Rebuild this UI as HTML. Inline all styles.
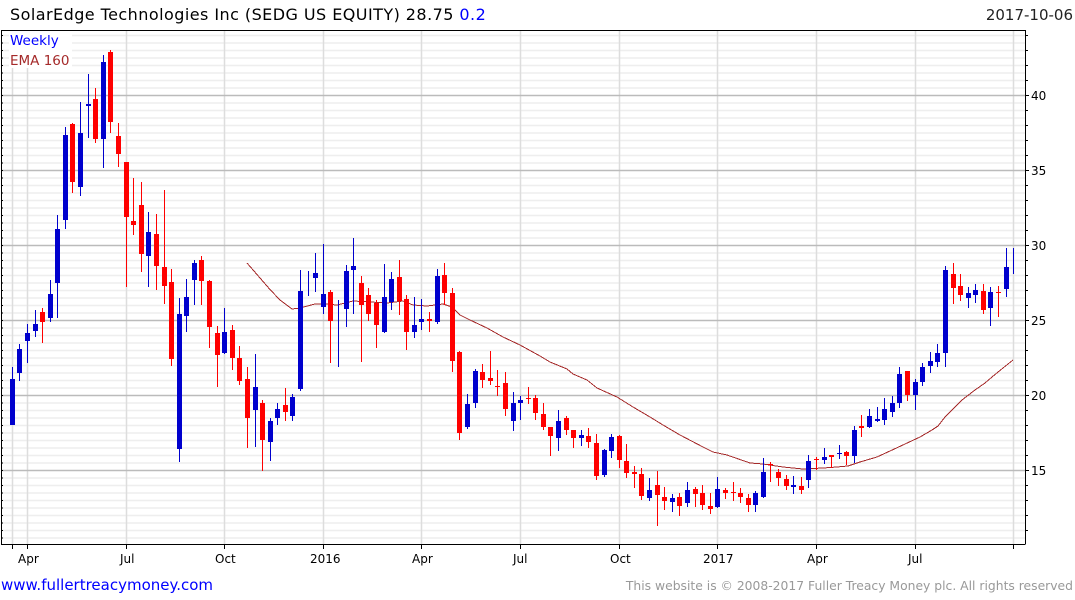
<!DOCTYPE html>
<html><head><meta charset="utf-8"><style>
html,body{margin:0;padding:0;background:#fff;width:1075px;height:600px;overflow:hidden}
svg{display:block}
text{font-family:"DejaVu Sans",sans-serif}
</style></head><body>
<svg width="1075" height="600" viewBox="0 0 1075 600" xmlns="http://www.w3.org/2000/svg">
<rect width="1075" height="600" fill="#fff"/>
<g stroke="#eee" stroke-width="1.5"><path d="M2 35.5H1025M2 43H1025M2 50.5H1025M2 58H1025M2 65.5H1025M2 73H1025M2 80.5H1025M2 88H1025M2 103H1025M2 110.5H1025M2 118H1025M2 125.5H1025M2 133H1025M2 140.5H1025M2 148H1025M2 155.5H1025M2 163H1025M2 178H1025M2 185.5H1025M2 193H1025M2 200.5H1025M2 208H1025M2 215.5H1025M2 223H1025M2 230.5H1025M2 238H1025M2 253H1025M2 260.5H1025M2 268H1025M2 275.5H1025M2 283H1025M2 290.5H1025M2 298H1025M2 305.5H1025M2 313H1025M2 328H1025M2 335.5H1025M2 343H1025M2 350.5H1025M2 358H1025M2 365.5H1025M2 373H1025M2 380.5H1025M2 388H1025M2 403H1025M2 410.5H1025M2 418H1025M2 425.5H1025M2 433H1025M2 440.5H1025M2 448H1025M2 455.5H1025M2 463H1025M2 478H1025M2 485.5H1025M2 493H1025M2 500.5H1025M2 508H1025M2 515.5H1025M2 523H1025M2 530.5H1025M2 538H1025"/></g>
<g stroke="#ddd" stroke-width="1.5"><path d="M12.5 31V544M27.5 31V544M126.5 31V544M224.5 31V544M323.5 31V544M421.5 31V544M520.5 31V544M619.5 31V544M717.5 31V544M816.5 31V544M915.5 31V544M1013.5 31V544"/></g>
<g stroke="#bbb" stroke-width="1.5"><path d="M2 95.5H1025M2 170.5H1025M2 245.5H1025M2 320.5H1025M2 395.5H1025M2 470.5H1025"/></g>
<rect x="9" y="31" width="63" height="37" fill="#fff"/>
<polyline fill="none" stroke="#a52a2a" stroke-width="1" shape-rendering="crispEdges" points="247,263 270,289.5 280,300 292,309 300,308 315,304 325,304 337,305 353,301 370,302 387,303 403,301 413,305 427,306 443,304 452,307 460,315 470,320 487,328 503,337 520,345 540,356 550,362 567,369 573,374 587,380 597,388 617,397 633,407 650,417 663,425 680,435 703,447 713,452 727,455 750,463 763,464 783,467 803,469 823,468 837,467 848,466 860,462 877,457 890,451 905,444 920,437 932,430 938,426 945,417 962,400 975,390 985,383 992,377 1003,368 1013,360"/>
<g stroke="#0000cd" stroke-width="1" shape-rendering="crispEdges"><path d="M12.5 367V425M19.5 344V381M27.5 324V363M35.5 310V337M50.5 280V322M57.5 215V318M65.5 127V229M80.5 102V196M88.5 74V138M103.5 55V168M148.5 212V287M179.5 298V462M186.5 279V332M194.5 260V305M224.5 308V354M255.5 354V447M270.5 418V461M277.5 403V425M292.5 394V421M300.5 270V391M308.5 271V296M315.5 253V292M323.5 244V314M338.5 300V367M346.5 265V327M353.5 238V314M384.5 264V333M391.5 272V310M414.5 297V338M421.5 299V330M437.5 269V324M467.5 394V429M475.5 369V408M513.5 392V431M520.5 396V420M558.5 410V451M581.5 430V446M604.5 449V477M611.5 434V458M649.5 478V501M672.5 494V512M687.5 482V507M717.5 477V508M755.5 491V512M763.5 458V498M793.5 476V494M808.5 455V488M824.5 448V464M839.5 445V459M854.5 426V463M869.5 409V428M877.5 407V422M884.5 398V425M892.5 396V417M899.5 367V408M915.5 379V410M922.5 363V386M930.5 352V373M937.5 344V367M945.5 266V367M968.5 287V308M975.5 284V303M990.5 287V326M1006.5 248V297M1013.5 248V274"/></g>
<g fill="#0000cd" shape-rendering="crispEdges"><path d="M10 379h5V425h-5zM17 349h5V373h-5zM25 333h5V341h-5zM33 324h5V331h-5zM48 294h5V318h-5zM55 229h5V283h-5zM63 135h5V220h-5zM78 133h5V187h-5zM86 104h5V106h-5zM101 62h5V139h-5zM146 232h5V256h-5zM177 314h5V449h-5zM184 297h5V316h-5zM192 263h5V280h-5zM222 332h5V353h-5zM253 387h5V410h-5zM268 421h5V442h-5zM275 409h5V418h-5zM290 397h5V416h-5zM298 291h5V389h-5zM313 273h5V278h-5zM321 294h5V307h-5zM344 271h5V309h-5zM351 266h5V270h-5zM382 297h5V332h-5zM389 279h5V302h-5zM412 325h5V332h-5zM419 319h5V322h-5zM435 276h5V322h-5zM465 404h5V427h-5zM473 371h5V403h-5zM511 403h5V421h-5zM518 400h5V403h-5zM556 421h5V438h-5zM579 435h5V438h-5zM602 450h5V475h-5zM609 437h5V451h-5zM647 490h5V498h-5zM670 498h5V502h-5zM685 490h5V503h-5zM715 489h5V507h-5zM753 493h5V505h-5zM761 472h5V497h-5zM791 485h5V487h-5zM806 461h5V480h-5zM822 457h5V460h-5zM837 453h5V454h-5zM852 430h5V456h-5zM867 416h5V427h-5zM875 419h5V421h-5zM882 409h5V420h-5zM890 403h5V412h-5zM897 374h5V403h-5zM913 382h5V395h-5zM920 367h5V382h-5zM928 361h5V366h-5zM935 353h5V362h-5zM943 270h5V353h-5zM966 293h5V298h-5zM973 290h5V295h-5zM988 292h5V308h-5zM1004 267h5V289h-5z"/></g>
<g stroke="#f00" stroke-width="1" shape-rendering="crispEdges"><path d="M42.5 308V343M72.5 123V193M95.5 88V143M110.5 50V133M118.5 123V167M126.5 162V287M133.5 178V235M141.5 182V272M156.5 214V290M164.5 190V304M171.5 269V366M201.5 256V305M209.5 280V348M217.5 326V387M232.5 325V370M239.5 346V385M247.5 367V448M262.5 400V471M285.5 388V421M330.5 290V363M361.5 276V362M368.5 288V321M376.5 300V348M399.5 260V315M406.5 295V350M429.5 312V332M444.5 263V305M452.5 288V372M459.5 351V440M482.5 364V388M490.5 351V385M497.5 370V396M505.5 372V416M528.5 387V404M535.5 395V420M543.5 403V430M550.5 427V456M566.5 416V435M573.5 430V448M588.5 428V448M596.5 434V480M619.5 435V468M626.5 444V478M634.5 466V488M641.5 468V500M657.5 471V526M664.5 487V510M679.5 493V516M695.5 487V507M702.5 485V510M710.5 493V514M725.5 488V499M733.5 482V501M740.5 488V503M748.5 494V512M770.5 462V482M778.5 469V486M786.5 475V490M801.5 477V494M816.5 457V470M831.5 455V468M846.5 451V465M861.5 415V437M907.5 371V401M953.5 263V304M960.5 274V301M983.5 284V314M998.5 286V317"/></g>
<g fill="#f00" shape-rendering="crispEdges"><path d="M40 312h5V322h-5zM70 124h5V182h-5zM93 99h5V139h-5zM108 52h5V122h-5zM116 136h5V154h-5zM124 162h5V217h-5zM131 221h5V225h-5zM139 205h5V254h-5zM154 234h5V266h-5zM162 267h5V286h-5zM169 282h5V359h-5zM199 260h5V281h-5zM207 281h5V327h-5zM215 333h5V355h-5zM230 330h5V358h-5zM237 358h5V381h-5zM245 379h5V418h-5zM260 403h5V440h-5zM283 405h5V412h-5zM328 292h5V321h-5zM359 283h5V305h-5zM366 295h5V314h-5zM374 303h5V325h-5zM397 277h5V301h-5zM404 299h5V332h-5zM427 319h5V321h-5zM442 275h5V293h-5zM450 293h5V361h-5zM457 352h5V433h-5zM480 372h5V380h-5zM488 378h5V381h-5zM495 386h5V387h-5zM503 383h5V409h-5zM526 398h5V399h-5zM533 398h5V413h-5zM541 414h5V427h-5zM548 427h5V436h-5zM564 418h5V430h-5zM571 430h5V438h-5zM586 436h5V442h-5zM594 443h5V476h-5zM617 436h5V460h-5zM624 461h5V473h-5zM632 472h5V474h-5zM639 474h5V496h-5zM655 485h5V495h-5zM662 497h5V501h-5zM677 497h5V506h-5zM693 489h5V494h-5zM700 493h5V505h-5zM708 506h5V509h-5zM723 490h5V493h-5zM731 492h5V493h-5zM738 493h5V497h-5zM746 498h5V505h-5zM768 464h5V465h-5zM776 472h5V478h-5zM784 479h5V486h-5zM799 486h5V490h-5zM814 459h5V460h-5zM829 455h5V457h-5zM844 452h5V456h-5zM859 426h5V428h-5zM905 371h5V395h-5zM951 274h5V288h-5zM958 286h5V295h-5zM981 291h5V310h-5zM996 292h5V293h-5z"/></g>
<g stroke="#000" stroke-width="1" shape-rendering="crispEdges" fill="none"><path d="M1 30.5H1025.5V544M1.5 30V544.5H1025.5M12.5 544V549M27.5 544V549M126.5 544V549M224.5 544V549M323.5 544V549M421.5 544V549M520.5 544V549M619.5 544V549M717.5 544V549M816.5 544V549M915.5 544V549M1013.5 544V549"/>
<path d="M2 35.5H3M2 43H3M2 50.5H3M2 58H3M2 65.5H3M2 73H3M2 80.5H3M2 88H3M2 95.5H3M2 103H3M2 110.5H3M2 118H3M2 125.5H3M2 133H3M2 140.5H3M2 148H3M2 155.5H3M2 163H3M2 170.5H3M2 178H3M2 185.5H3M2 193H3M2 200.5H3M2 208H3M2 215.5H3M2 223H3M2 230.5H3M2 238H3M2 245.5H3M2 253H3M2 260.5H3M2 268H3M2 275.5H3M2 283H3M2 290.5H3M2 298H3M2 305.5H3M2 313H3M2 320.5H3M2 328H3M2 335.5H3M2 343H3M2 350.5H3M2 358H3M2 365.5H3M2 373H3M2 380.5H3M2 388H3M2 395.5H3M2 403H3M2 410.5H3M2 418H3M2 425.5H3M2 433H3M2 440.5H3M2 448H3M2 455.5H3M2 463H3M2 470.5H3M2 478H3M2 485.5H3M2 493H3M2 500.5H3M2 508H3M2 515.5H3M2 523H3M2 530.5H3M2 538H3"/>
<path d="M1026 35.5H1028M1026 50.5H1028M1026 65.5H1028M1026 80.5H1028M1026 95.5H1029M1026 110.5H1028M1026 125.5H1028M1026 140.5H1028M1026 155.5H1028M1026 170.5H1029M1026 185.5H1028M1026 200.5H1028M1026 215.5H1028M1026 230.5H1028M1026 245.5H1029M1026 260.5H1028M1026 275.5H1028M1026 290.5H1028M1026 305.5H1028M1026 320.5H1029M1026 335.5H1028M1026 350.5H1028M1026 365.5H1028M1026 380.5H1028M1026 395.5H1029M1026 410.5H1028M1026 425.5H1028M1026 440.5H1028M1026 455.5H1028M1026 470.5H1029M1026 485.5H1028M1026 500.5H1028M1026 515.5H1028M1026 530.5H1028"/></g>
<text x="10" y="20" font-size="16" letter-spacing=".45" fill="#000">SolarEdge Technologies Inc (SEDG US EQUITY) 28.75 <tspan fill="#00f">0.2</tspan></text>
<text x="1073" y="20" font-size="15" fill="#222" text-anchor="end">2017-10-06</text>
<text x="10" y="45" font-size="13.5" fill="#00f">Weekly</text>
<text x="10" y="65" font-size="13.5" fill="#a52a2a">EMA 160</text>
<g font-size="12" fill="#000"><text x="1031" y="100">40</text><text x="1031" y="175">35</text><text x="1031" y="250">30</text><text x="1031" y="325">25</text><text x="1031" y="400">20</text><text x="1031" y="475">15</text></g>
<g font-size="12" fill="#000"><text x="18" y="563">Apr</text><text x="120" y="563">Jul</text><text x="215" y="563">Oct</text><text x="310" y="563">2016</text><text x="412" y="563">Apr</text><text x="513" y="563">Jul</text><text x="610" y="563">Oct</text><text x="703" y="563">2017</text><text x="807" y="563">Apr</text><text x="908" y="563">Jul</text></g>
<text x="1" y="590" font-size="15" fill="#00f">www.fullertreacymoney.com</text>
<text x="1073" y="590" font-size="12.35" fill="#999" text-anchor="end">This website is © 2008-2017 Fuller Treacy Money plc. All rights reserved</text>
</svg>
</body></html>
